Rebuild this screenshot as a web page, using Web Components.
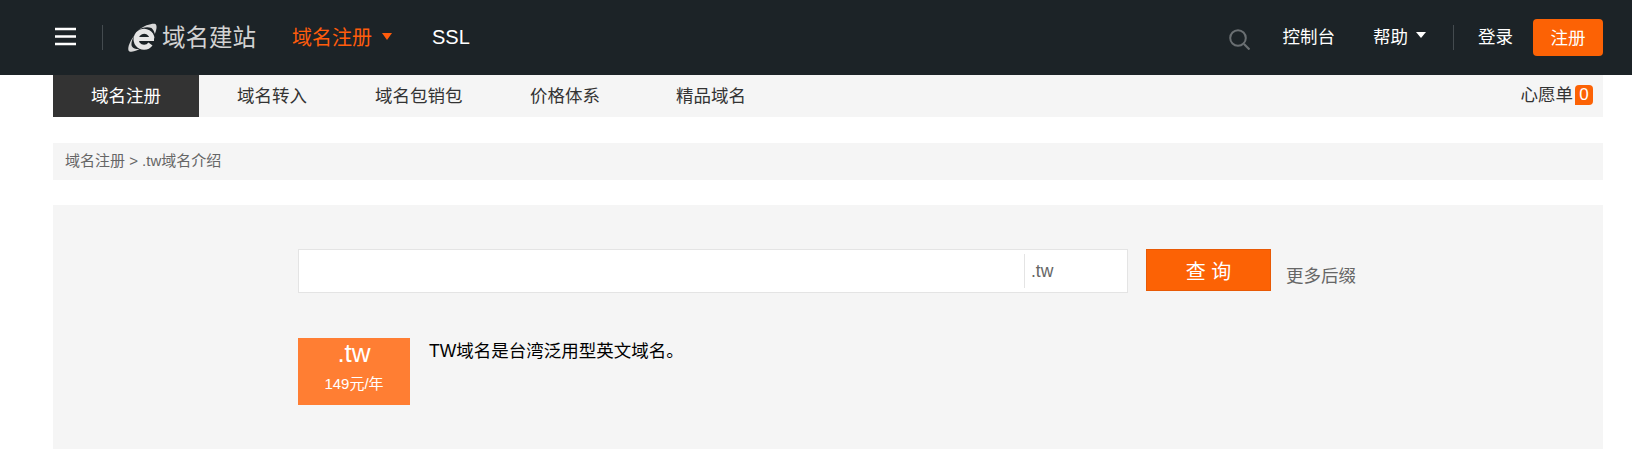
<!DOCTYPE html>
<html lang="zh">
<head>
<meta charset="utf-8">
<title>.tw域名介绍</title>
<style>
  html, body { margin: 0; background: #fff; }
  body { font-family: "Liberation Sans", "Noto Sans CJK SC", sans-serif; }
</style>
</head>
<body>
<top-bar></top-bar>
<sub-nav></sub-nav>
<bread-crumb>域名注册 &gt; .tw域名介绍</bread-crumb>
<search-panel>
  <domain-search></domain-search>
  <tld-intro name=".tw" price="149元/年">TW域名是台湾泛用型英文域名。</tld-intro>
</search-panel>

<script>
// top header bar
class TopBar extends HTMLElement {
  connectedCallback() {
    const shadow = this.attachShadow({ mode: "open" });
    shadow.innerHTML = `
    <style>
      :host { display: flex; align-items: center; height: 75px; background: #1c2327; color: #fff; padding: 0 29px 0 55px; font-size: 17.5px; }
      .menu { display: block; width: 21px; height: 19px; margin-right: 26px; margin-top: -2px; }
      .sep { width: 1px; height: 25px; background: #444b4f; flex: none; margin-top: -1px; }
      .logo { display: flex; align-items: center; margin-left: 25px; color: #d2d2d2; font-size: 23.5px; margin-top: -3px; }
      .logo svg { width: 30px; height: 30px; margin-right: 5px; margin-left: -1px; margin-top: 4px; }
      a { color: inherit; text-decoration: none; }
      .reg { color: #ff5c0c; font-size: 20px; margin-left: 36px; display: flex; align-items: center; margin-top: -3px; }
      .ssl { font-size: 20px; margin-left: 40px; margin-top: -1px; }
      .tri { display: inline-block; width: 0; height: 0; border-style: solid; border-color: transparent; border-width: 7px 5px 0; border-top-color: currentColor; margin-left: 10px; margin-top: 0; }
      .right { margin-left: auto; display: flex; align-items: center; margin-top: -4px; }
      .search { width: 21px; height: 21px; margin-right: 33px; margin-top: 8px; }
      .help { margin-left: 38px; display: flex; align-items: center; }
      .help .tri { border-top-color: #fff; border-width: 6px 5px 0; margin-left: 8px; margin-top: -2px; }
      .right .sep { margin-left: 27px; margin-right: 24px; margin-top: 3px; }
      .btn { background: #fc6205; border-radius: 4px; width: 70px; height: 37px; line-height: 39px; text-align: center; margin-left: 20px; margin-top: 3px; }
    </style>
    <svg class="menu" viewBox="0 0 21 19"><path d="M0 2h21M0 9.500h21M0 17h21" stroke="#fff" stroke-width="2.400" fill="none"/></svg>
    <span class="sep"></span>
    <div class="logo">
      <svg viewBox="0 0 30 30">
        <path d="M11 7.500C17 2.500 24 .5 27.500.8c2.600.3 2.800 4 .3 10.200-.7-2.800-1.700-4.500-3.300-6C20 3.500 15 4.500 11 7.500z" fill="#d8d8d8"/>
        <path d="M8 11.500C3 18 .5 24 1.500 27.500c1 2.200 5.500 1.500 11-1.500-3.500.2-6-.5-7.500-2.500-1.300-2.500 0-7.500 3-12z" fill="#d8d8d8"/>
        <path d="M25 15.500A8 8 0 1 0 23.500 21" fill="none" stroke="#e6e6e6" stroke-width="5"/>
        <path d="M10 16H27" stroke="#e6e6e6" stroke-width="4"/>
      </svg>
      <span>域名建站</span>
    </div>
    <a class="reg" href="#">域名注册<span class="tri"></span></a>
    <a class="ssl" href="#">SSL</a>
    <div class="right">
      <svg class="search" viewBox="0 0 21 21"><circle cx="9" cy="9" r="7.800" fill="none" stroke="#6a6f72" stroke-width="2"/><path d="M15 15L20.500 20.500" stroke="#6a6f72" stroke-width="2.200"/></svg>
      <a href="#">控制台</a>
      <a class="help" href="#">帮助<span class="tri"></span></a>
      <span class="sep"></span>
      <a href="#">登录</a>
      <a class="btn" href="#">注册</a>
    </div>
    `;
  }
}
customElements.define("top-bar", TopBar);

// tabs under the header
class SubNav extends HTMLElement {
  connectedCallback() {
    const shadow = this.attachShadow({ mode: "open" });
    shadow.innerHTML = `
    <style>
      :host { display: flex; align-items: stretch; height: 42px; margin: 0 29px 0 53px; background: #f5f5f5; color: #333; font-size: 17.5px; line-height: 42px; }
      a { color: inherit; text-decoration: none; }
      .tab { padding: 0 38px; white-space: nowrap; }
      .on { background: #333; color: #fff; }
      .tab.mid { padding: 0 29.500px 0 30px; }
      .wish { margin-left: auto; padding-right: 10px; display: flex; align-items: center; margin-top: -2px; }
      .num { background: #fc6205; color: #fff; border-radius: 4px 4px 4px 0; width: 18px; height: 20px; line-height: 20px; text-align: center; margin-left: 2px; font-size: 17px; }
    </style>
    <a class="tab on" href="#">域名注册</a>
    <a class="tab" href="#">域名转入</a>
    <a class="tab mid" href="#">域名包销包</a>
    <a class="tab" href="#">价格体系</a>
    <a class="tab" href="#">精品域名</a>
    <div class="wish">心愿单<span class="num">0</span></div>
    `;
  }
}
customElements.define("sub-nav", SubNav);

class BreadCrumb extends HTMLElement {
  connectedCallback() {
    const shadow = this.attachShadow({ mode: "open" });
    shadow.innerHTML = `
    <style>
      :host { display: block; height: 37px; line-height: 36px; margin: 26px 29px 25px 53px; padding-left: 12px; background: #f5f5f5; color: #666; font-size: 15px; }
    </style>
    <slot></slot>
    `;
  }
}
customElements.define("bread-crumb", BreadCrumb);

class SearchPanel extends HTMLElement {
  connectedCallback() {
    const shadow = this.attachShadow({ mode: "open" });
    shadow.innerHTML = `
    <style>
      :host { display: block; height: 244px; box-sizing: border-box; margin: 0 29px 0 53px; padding: 44px 0 0 245px; background: #f5f5f5; }
    </style>
    <slot></slot>
    `;
  }
}
customElements.define("search-panel", SearchPanel);

// input + suffix + button row
class DomainSearch extends HTMLElement {
  connectedCallback() {
    const shadow = this.attachShadow({ mode: "open" });
    shadow.innerHTML = `
    <style>
      :host { display: flex; align-items: flex-start; }
      .box { display: flex; align-items: center; width: 830px; height: 44px; box-sizing: border-box; background: #fff; border: 1px solid #e4e4e4; }
      input { flex: 1; min-width: 0; border: 0; outline: 0; background: none; height: 100%; padding: 0 10px; }
      .tld { width: 103px; height: 34px; line-height: 34px; border-left: 1px solid #e4e4e4; padding-left: 6px; box-sizing: border-box; color: #666; font-size: 17.500px; }
      button { width: 125px; height: 42px; margin-left: 18px; padding: 0; border: 1px solid #e85a05; background: #fc6205; color: #fff; font: inherit; font-size: 20px; }
      .more { margin: 15px 0 0 15px; color: #666; font-size: 17.500px; line-height: 24px; }
    </style>
    <div class="box"><input type="text" aria-label="域名"><span class="tld">.tw</span></div>
    <button type="button">查 询</button>
    <a class="more">更多后缀</a>
    `;
  }
}
customElements.define("domain-search", DomainSearch);

class TldIntro extends HTMLElement {
  connectedCallback() {
    const shadow = this.attachShadow({ mode: "open" });
    shadow.innerHTML = `
    <style>
      :host { display: flex; align-items: flex-start; margin-top: 45px; color: #000; font-size: 17.500px; line-height: 26px; }
      .badge { width: 112px; height: 67px; flex: none; background: #ff7e33; color: #fff; text-align: center; margin-right: 19px; }
      .name { font-size: 26px; line-height: 30px; }
      .price { font-size: 15px; line-height: 20px; margin-top: 6px; }
    </style>
    <div class="badge">
      <div class="name">${this.getAttribute("name")}</div>
      <div class="price">${this.getAttribute("price")}</div>
    </div>
    <div><slot></slot></div>
    `;
  }
}
customElements.define("tld-intro", TldIntro);
</script>
</body>
</html>
